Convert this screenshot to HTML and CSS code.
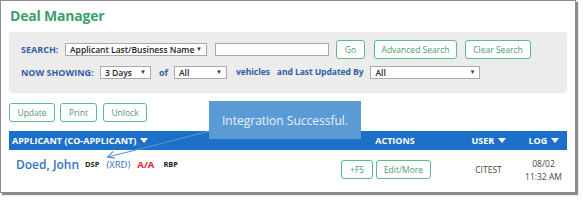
FILE: index.html
```html
<!DOCTYPE html>
<html>
<head>
<meta charset="utf-8">
<link rel="stylesheet" href="styles.css">
</head>
<body>
<div class="frame">
  <h1 class="title">Deal Manager</h1>
  <div class="panel">
    <div class="prow">
      <span class="lbl lbl-search">SEARCH:</span>
      <span class="sel sel-type"><span>Applicant Last/Business Name</span><i>▼</i></span>
      <span class="txt"></span>
      <span class="btn btn-go">Go</span>
      <span class="btn btn-adv">Advanced Search</span>
      <span class="btn btn-clear">Clear Search</span>
    </div>
    <div class="prow prow2">
      <span class="lbl lbl-now">NOW SHOWING:</span>
      <span class="sel sel-days"><span>3 Days</span><i>▼</i></span>
      <span class="lbl lbl-of">of</span>
      <span class="sel sel-all"><span>All</span><i>▼</i></span>
      <span class="lbl lbl-veh">vehicles</span>
      <span class="lbl lbl-and">and Last Updated By</span>
      <span class="sel sel-by"><span>All</span><i>▼</i></span>
    </div>
  </div>
  <div class="tools">
    <span class="btn btn-upd">Update</span>
    <span class="btn btn-print">Print</span>
    <span class="btn btn-unlock">Unlock</span>
  </div>
  <div class="thead">
    <span class="c1">APPLICANT (CO-APPLICANT) <i class="caret"></i></span>
    <span class="c2">ACTIONS</span>
    <span class="c3">USER <i class="caret"></i></span>
    <span class="c4">LOG <i class="caret"></i></span>
  </div>
  <div class="trow">
    <span class="c1">
      <span class="name">Doed, John</span>
      <span class="tag">DSP</span>
      <span class="xrd">(XRD)</span>
      <span class="aa">A/A</span>
      <span class="tag">RBP</span>
    </span>
    <span class="c2 acts">
      <span class="btn btn-fs">+FS</span>
      <span class="btn btn-edit">Edit/More</span>
    </span>
    <span class="c3 user">CITEST</span>
    <span class="c4 log">08/02<br>11:32 AM</span>
  </div>
  <div class="callout">Integration Successful.</div>
  <svg class="arrow" width="583" height="200" viewBox="0 0 583 200">
    <line x1="210" y1="131" x2="108" y2="157" stroke="#5b94cf" stroke-width="1.2"/>
    <polyline points="113,151.5 107.5,157.2 115,158.2" fill="none" stroke="#5b94cf" stroke-width="1.2"/>
  </svg>
</div>
</body>
</html>
```

FILE: styles.css
```css
* { box-sizing: border-box; }
html, body { margin: 0; padding: 0; background: #fff; }
body { font-family: "Open Sans", "Liberation Sans", sans-serif; width: 583px; height: 200px; position: relative; }

.frame {
  position: relative;
  width: 576px;
  height: 193px;
  border: 1px solid #8c8c8c;
  box-shadow: 2px 2px 1px rgba(0,0,0,0.45);
  padding: 0 8px;
  background: #fff;
}

.title {
  margin: 5px 0 0 1px;
  font-size: 14px;
  line-height: 20px;
  font-weight: 700;
  color: #3da06d;
  height: 26px;
  letter-spacing: -0.2px;
}

.panel {
  background: #ececec;
  border-radius: 3px;
  height: 61px;
  padding: 8px 0 0 12px;
}

.prow { display: flex; align-items: center; height: 19px; }
.prow2 { margin-top: 7px; height: 13px; }

.lbl { font-size: 9px; font-weight: 700; color: #2e5fa5; white-space: nowrap; line-height: 13px; }
.lbl-search { width: 44px; }
.lbl-now { width: 79px; }
.lbl-of { margin-left: 8px; width: 15px; }
.lbl-veh { margin-left: 9px; font-size: 8.6px; letter-spacing: -0.1px; }
.lbl-and { margin-left: 7px; font-size: 8.6px; letter-spacing: -0.1px; }

.sel {
  display: flex; align-items: center; justify-content: space-between;
  height: 13px; background: #fff; border: 1px solid #a9a9a9;
  font-size: 8.5px; color: #222; padding: 0 4px 0 4px; line-height: 11px; white-space: nowrap;
  font-weight: 600;
}
.sel i { font-style: normal; font-size: 6px; color: #333; }
.sel-type { width: 142px; }
.sel-days { width: 51px; }
.sel-all { width: 53px; }
.sel-by { width: 110px; margin-left: 7px; }

.txt { width: 114px; height: 13px; background: #fff; border: 1px solid #a9a9a9; margin-left: 8px; }

.btn {
  display: inline-flex; align-items: center; justify-content: center;
  height: 19px; border: 1px solid #5cbb8b; border-radius: 3px; background: #fff;
  color: #4d9c72; font-size: 8.5px; white-space: nowrap;
}
.btn-go { width: 29px; margin-left: 7px; }
.btn-adv { width: 83px; margin-left: 9px; }
.btn-clear { width: 66px; margin-left: 8px; }

.tools { display: flex; gap: 5px; margin-top: 10px; height: 19px; }
.btn-upd { width: 46px; }
.btn-print { width: 37px; }
.btn-unlock { width: 44px; margin-left: 1px; }

.thead {
  display: flex; align-items: center;
  margin-top: 9px; height: 19px; background: #1c70c8;
  color: #fff; font-size: 9px; font-weight: 700;
}
.caret {
  display: inline-block; width: 0; height: 0; vertical-align: middle;
  border-left: 4px solid transparent; border-right: 4px solid transparent;
  border-top: 5px solid #fff; margin-left: 1px; position: relative; top: -1px;
}
.c1 { width: 326px; padding-left: 3px; white-space: nowrap; }
.c2 { width: 120px; text-align: center; }
.c3 { width: 67px; text-align: center; }
.c4 { width: 43px; text-align: center; white-space: nowrap; }

.trow { display: flex; align-items: center; height: 39px; }
.trow .c1 { display: flex; align-items: center; padding-left: 7px; padding-bottom: 11px; }
.name { font-size: 12px; font-weight: 600; color: #3674c4; margin-right: 6px; }
.tag { font-size: 7.5px; font-weight: 700; color: #222; margin-right: 7px; }
.xrd { font-size: 9.5px; color: #3674c4; margin-right: 7px; }
.aa { font-size: 9.5px; font-weight: 700; color: #e8212b; margin-right: 9px; }
.acts { display: flex; justify-content: flex-start; padding-left: 6px; gap: 3px; }
.btn-fs { width: 32px; }
.btn-edit { width: 55px; }
.user { font-size: 8.5px; color: #444; }
.log { font-size: 8.5px; color: #444; line-height: 13px; }

.callout {
  position: absolute; left: 208px; top: 100px;
  width: 152px; height: 38px; background: #5b9bd5;
  color: #e9f1fb; font-size: 12px; display: flex; align-items: center; justify-content: center;
}
.arrow { position: absolute; left: -1px; top: -1px; pointer-events: none; }
```
